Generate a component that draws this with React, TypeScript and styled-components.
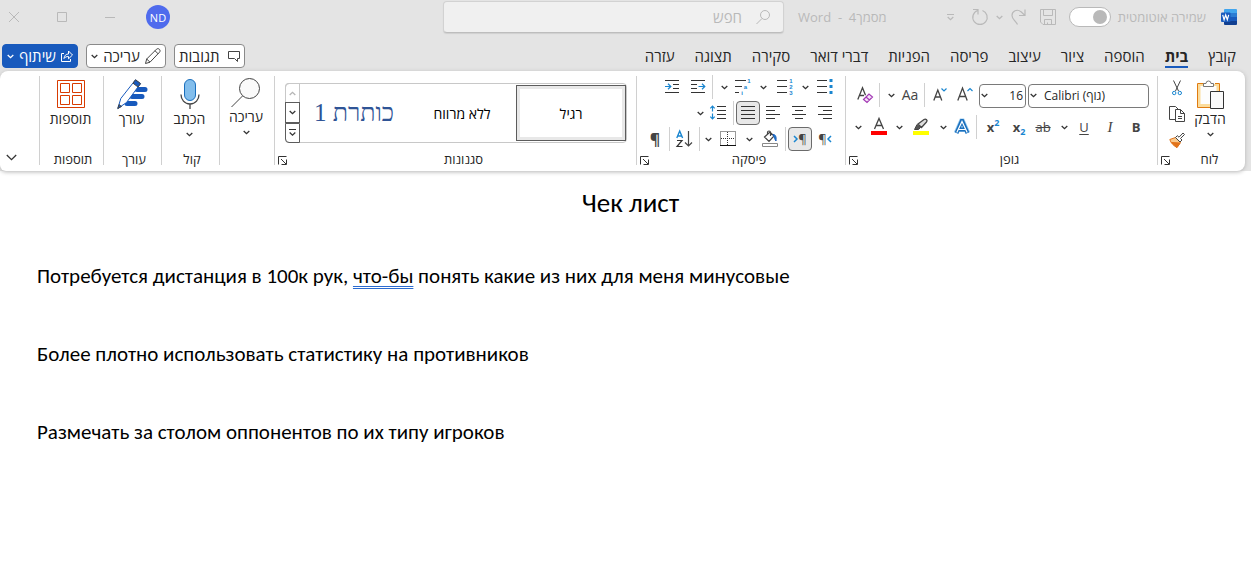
import React from "react";
import styled, { createGlobalStyle, css } from "styled-components";

const UI = '"Open Sans", "Noto Sans", "Liberation Sans", sans-serif';
const INK = "#262626";
const BLUE = "#185abd";
const SKY = "#1a86d0";
const MUTED = "#b9b9b9";

const Global = createGlobalStyle`
  *, *::before, *::after { box-sizing: border-box; }
  body { margin: 0; background: #fff; font-family: ${UI}; color: ${INK}; }
  button, input, select { font: inherit; color: inherit; margin: 0; }
  svg { display: block; flex: none; overflow: visible; }
`;

const Chrome = styled.header`
  background: #e4e4e4;
  direction: rtl;
`;

const TitleBar = styled.div`
  display: grid;
  grid-template-columns: 467px minmax(160px, 1fr) 443px;
  align-items: center;
  height: 34px;
  color: ${MUTED};
  font-size: 13px;
`;

const TitleTools = styled.div`
  display: flex;
  align-items: center;
  padding-right: 14px;
`;

const PlainButton = styled.button<{ $w?: number; $h?: number }>`
  display: flex;
  flex: none;
  align-items: center;
  justify-content: center;
  width: ${(p) => p.$w ?? 26}px;
  height: ${(p) => p.$h ?? 24}px;
  padding: 0;
  border: 0;
  border-radius: 4px;
  background: none;
  white-space: nowrap;
`;

const AutoSave = styled.label`
  display: flex;
  align-items: center;
  gap: 7px;
  margin: 0 15px 0 6px;
  white-space: nowrap;
`;

const Toggle = styled.input`
  appearance: none;
  width: 42px;
  height: 20px;
  padding: 2px;
  border: 1px solid ${MUTED};
  border-radius: 10px;
  background: #fff;
  &::before {
    content: "";
    display: block;
    width: 14px;
    height: 14px;
    margin-right: 1px;
    border-radius: 50%;
    background: ${MUTED};
  }
`;

const DocName = styled.div`
  margin-right: 50px;
  white-space: pre;
`;

const SearchBox = styled.label`
  display: flex;
  align-items: center;
  gap: 14px;
  height: 32px;
  padding: 0 13px;
  border: 1px solid #d2d2d2;
  border-bottom-color: #bdbdbd;
  border-radius: 4px;
  background: #f0f0f0;
  box-shadow: 0 1px 1px #cfcfcf;
`;

const SearchInput = styled.input`
  flex: 1;
  min-width: 0;
  padding: 0;
  border: 0;
  outline: 0;
  background: none;
  font-size: 15px;
  &::placeholder { color: ${MUTED}; opacity: 1; }
`;

const WindowTools = styled.div`
  display: flex;
  align-items: center;
  justify-content: flex-end;
`;

const Avatar = styled.button`
  width: 24px;
  height: 24px;
  margin-left: 22px;
  padding: 0;
  border: 0;
  border-radius: 50%;
  background: #4f6bed;
  color: #fff;
  font-size: 11px;
`;

const TabBar = styled.div`
  display: flex;
  align-items: center;
  justify-content: space-between;
  height: 37px;
  padding: 7px 15px 0 2px;
`;

const Tabs = styled.nav`
  display: flex;
  gap: 20px;
`;

const Tab = styled.a<{ $on?: boolean }>`
  height: 24px;
  border-bottom: 2px solid ${(p) => (p.$on ? BLUE : "transparent")};
  color: ${INK};
  font-size: 15px;
  font-weight: ${(p) => (p.$on ? 700 : 400)};
  line-height: 24px;
  text-decoration: none;
  white-space: nowrap;
`;

const Actions = styled.div`
  display: flex;
  gap: 8px;
`;

const Action = styled.button<{ $w: number; $primary?: boolean }>`
  display: flex;
  align-items: center;
  justify-content: space-between;
  width: ${(p) => p.$w}px;
  height: 24px;
  padding: 0 4px;
  border: 1px solid ${(p) => (p.$primary ? BLUE : "#8a8a8a")};
  border-radius: 4px;
  background: ${(p) => (p.$primary ? BLUE : "#fff")};
  color: ${(p) => (p.$primary ? "#fff" : INK)};
  font-size: 15px;
  line-height: 20px;
  white-space: nowrap;
`;

const Ribbon = styled.div`
  display: flex;
  height: 100px;
  margin-right: 6px;
  padding: 5px 0 6px;
  border-radius: 8px 8px 8px 6px;
  background: #fff;
  box-shadow: 0 1px 4px #b4b4b4;
`;

const Group = styled.section<{ $w?: number }>`
  display: flex;
  flex: none;
  flex-direction: column;
  justify-content: space-between;
  width: ${(p) => (p.$w ? p.$w + "px" : "auto")};
  border-left: 1px solid #d0d0d0;
`;

const StyleGroup = styled(Group)`
  flex: 1;
  min-width: 240px;
`;

const GroupFoot = styled.div`
  display: flex;
  align-items: flex-end;
  height: 10px;
  padding-left: 3px;
`;

const GroupName = styled.div<{ $launch?: boolean }>`
  flex: 1;
  padding-left: ${(p) => (p.$launch ? 4 : 0)}px;
  font-size: 13px;
  line-height: 12px;
  text-align: center;
`;

const Launcher = styled.button`
  height: 9px;
  padding: 0;
  border: 0;
  background: none;
`;

const Rows = styled.div<{ $gap: number; $top: number; $side: number }>`
  display: flex;
  flex-direction: column;
  gap: ${(p) => p.$gap}px;
  padding: ${(p) => p.$top}px ${(p) => p.$side}px 0 0;
`;

const Row = styled.div`
  display: flex;
  align-items: center;
  height: 22px;
`;

const Tool = styled(PlainButton)<{ $active?: boolean }>`
  ${(p) =>
    p.$active &&
    css`
      border: 1px solid #6b6b6b;
      background: #e8e8e8;
    `}
`;

const Rule = styled.span<{ $w: number }>`
  display: flex;
  flex: none;
  justify-content: center;
  width: ${(p) => p.$w}px;
  height: 24px;
  &::before {
    content: "";
    width: 1px;
    background: #d0d0d0;
  }
`;

const Combo = styled.div<{ $w: number }>`
  position: relative;
  flex: none;
  width: ${(p) => p.$w}px;
  height: 24px;
  & + & { margin-right: 2px; }
  svg {
    position: absolute;
    left: 2px;
    top: 10px;
    pointer-events: none;
  }
`;

const Select = styled.select<{ $dir: "ltr" | "rtl" }>`
  appearance: none;
  width: 100%;
  height: 24px;
  padding: ${(p) => (p.$dir === "ltr" ? "0 0 0 15px" : "0 2px 0 0")};
  border: 1px solid #7a7a7a;
  border-radius: 4px;
  background: #fff;
  direction: ${(p) => p.$dir};
  font-size: 12px;
`;

const Glyph = styled.span<{ $size?: number; $bold?: boolean; $color?: string }>`
  color: ${(p) => p.$color ?? "#444"};
  direction: ltr;
  font-size: ${(p) => p.$size ?? 13}px;
  font-weight: ${(p) => (p.$bold ? 700 : 400)};
  line-height: 20px;
`;

const Italic = styled(Glyph)`
  font-family: "Liberation Serif", serif;
  font-style: italic;
`;

const Under = styled(Glyph)`
  text-decoration: underline;
  text-underline-offset: 2px;
`;

const Struck = styled(Glyph)`
  text-decoration: line-through;
`;

const Script = styled.span<{ $sub?: boolean }>`
  align-self: ${(p) => (p.$sub ? "flex-end" : "flex-start")};
  color: ${SKY};
  font-size: 9px;
  font-weight: 700;
  line-height: ${(p) => (p.$sub ? 10 : 12)}px;
`;

const ScriptPair = styled.span`
  display: flex;
  direction: ltr;
  height: 20px;
`;

const Clipboard = styled.div`
  display: flex;
  padding-right: 14px;
`;

const ClipTools = styled.div`
  display: flex;
  flex-direction: column;
  gap: 2px;
  padding-right: 2px;
`;

const BigButton = styled.button<{ $w?: number }>`
  display: flex;
  flex: none;
  flex-direction: column;
  align-items: center;
  width: ${(p) => (p.$w ? p.$w + "px" : "100%")};
  padding: 2px 2px 0 0;
  border: 0;
  background: none;
  font-size: 14px;
  line-height: 18px;
  white-space: nowrap;
`;

const BigIcon = styled.span<{ $h?: number }>`
  display: flex;
  align-items: center;
  justify-content: center;
  height: ${(p) => p.$h ?? 32}px;
`;

const BigChevron = styled.span`
  display: flex;
  align-items: center;
  height: 13px;
`;

const Gallery = styled.div`
  display: flex;
  height: 60px;
  margin: 7px 9px 0 10px;
  border: 1px solid #c8c8c8;
  border-radius: 4px;
`;

const StyleCard = styled.button<{ $on?: boolean }>`
  flex: 1;
  height: 56px;
  margin-top: 1px;
  padding: 0;
  border: 0;
  background: #fff;
  color: #000;
  font-size: 14px;
  white-space: nowrap;
  ${(p) =>
    p.$on &&
    css`
      border: 1px solid #5c5c5c;
      box-shadow: inset 0 0 0 3px #e8e8e8;
    `}
`;

const HeadingSample = styled.span`
  color: #2f5496;
  font-family: "Liberation Serif", serif;
  font-size: 25px;
`;

const Scroller = styled.div`
  display: flex;
  flex: none;
  flex-direction: column;
  width: 15px;
  margin: -1px 0 -1px -1px;
`;

const ScrollButton = styled.button<{ $off?: boolean }>`
  display: flex;
  flex: 1;
  align-items: center;
  justify-content: center;
  padding: 0;
  border: 1px solid ${(p) => (p.$off ? "#c8c8c8" : "#5c5c5c")};
  background: none;
  &:first-child { border-top-left-radius: 4px; border-bottom: 0; }
  &:last-child { border-bottom-left-radius: 4px; }
`;

const Collapse = styled.div`
  display: flex;
  flex: none;
  align-items: flex-end;
  width: 39px;
  padding-left: 6px;
  justify-content: flex-end;
`;

const Document = styled.main`
  padding: 14px 37px 40px;
  color: #000;
  font-family: Carlito, Lato, sans-serif;
`;

const DocTitle = styled.h1`
  margin: 0 0 39px;
  padding-left: 10px;
  font-size: 27px;
  font-weight: 400;
  line-height: 36px;
  text-align: center;
`;

const Para = styled.p`
  margin: 0 0 46px;
  font-size: 21px;
  line-height: 32px;
`;

const Flagged = styled.u`
  text-decoration: underline double #2b6bd0 1px;
  text-underline-offset: 3px;
`;

const Chevron = ({ color = "#333", up = false }: { color?: string; up?: boolean }) => (
  <svg width="7" height="5" viewBox="0 0 7 5" fill="none" stroke={color} strokeWidth="1.3">
    <path d={up ? "M.7 4l2.8-2.7L6.3 4" : "M.7 1l2.8 2.7L6.3 1"} />
  </svg>
);

type SvgProps = { w?: number; h?: number; stroke?: string; children: React.ReactNode };
const Icon = ({ w = 16, h = 16, stroke = "#444", children }: SvgProps) => (
  <svg width={w} height={h} viewBox={`0 0 ${w} ${h}`} fill="none" stroke={stroke}>
    {children}
  </svg>
);

const WordLogo = () => (
  <svg width="16" height="16" viewBox="0 0 16 16">
    <path d="M4 0h11a1 1 0 0 1 1 1v3H3V1a1 1 0 0 1 1-1z" fill="#41a5ee" />
    <path d="M3 4h13v4H3z" fill="#2b7cd3" />
    <path d="M3 8h13v4H3z" fill="#185abd" />
    <path d="M3 12h13v3a1 1 0 0 1-1 1H4a1 1 0 0 1-1-1z" fill="#103f91" />
    <rect y="3.500" width="9.500" height="9.500" rx="1" fill="#185abd" />
    <path d="M1.700 5.800l1.400 5 1.600-4.800 1.600 4.800 1.400-5" fill="none" stroke="#fff" strokeWidth="1.200" />
  </svg>
);

const LauncherIcon = () => (
  <Icon w={9} h={9} stroke="#333">
    <path d="M8.500.5h-8v8M3 3l5 5M8.500 3.500v5h-5" />
  </Icon>
);

const Lines = ({ short }: { short?: "left" | "right" }) => (
  <Icon w={14} h={14} stroke="#333">
    <path
      d={
        short === "left"
          ? "M0 .5h14M0 4.500h9M0 8.500h14M0 12.500h9"
          : short === "right"
            ? "M0 .5h14M5 4.500h9M0 8.500h14M5 12.500h9"
            : "M0 .5h14M0 4.500h14M0 8.500h14M0 12.500h14"
      }
    />
  </Icon>
);

const CenterLines = () => (
  <Icon w={14} h={14} stroke="#333">
    <path d="M0 .5h14M3 4.500h8M0 8.500h14M3 12.500h8" />
  </Icon>
);

const Digit = styled.text`
  fill: ${SKY};
  stroke: none;
  font: 700 6px "Liberation Sans", sans-serif;
`;

const ChevronTool = ({ w, label }: { w: number; label: string }) => (
  <Tool $w={w} aria-label={label}>
    <Chevron />
  </Tool>
);

const Foot = ({ name, launch = true }: { name: string; launch?: boolean }) => (
  <GroupFoot>
    <GroupName $launch={launch}>{name}</GroupName>
    {launch && (
      <Launcher aria-label={`${name} – אפשרויות`}>
        <LauncherIcon />
      </Launcher>
    )}
  </GroupFoot>
);

const TABS = ["קובץ", "בית", "הוספה", "ציור", "עיצוב", "פריסה", "הפניות", "דברי דואר", "סקירה", "תצוגה", "עזרה"];

const ClipboardGroup = () => (
  <Group $w={88}>
    <Clipboard>
      <BigButton $w={40}>
        <BigIcon>
          <Icon w={24} h={31}>
            <path d="M6 4.500H-.5v24H12M17 4.500h4.500V12" stroke="#e07b10" />
            <path d="M0 5h21v8h-8v15H0z" fill="#fbdc9c" stroke="none" />
            <path d="M2.500 7h16v6H12v12H2.500z" fill="#fdfdfd" stroke="none" />
            <path d="M5.500 7.500v-3H8a2.500 2.500 0 0 1 5 0h2.500v3z" fill="#fff" stroke="#777" />
            <path d="M12.500 12.500h13v17h-13z" fill="#fafafa" stroke="#333" />
          </Icon>
        </BigIcon>
        הדבק
        <BigChevron>
          <Chevron />
        </BigChevron>
      </BigButton>
      <ClipTools>
        <PlainButton $w={24} aria-label="גזור">
          <Icon w={10} h={16}>
            <path d="M1.500.5l5 10.500M8.500.5l-5 10.500" />
            <circle cx="2.200" cy="13" r="1.700" stroke={SKY} />
            <circle cx="7.800" cy="13" r="1.700" stroke={SKY} />
          </Icon>
        </PlainButton>
        <PlainButton $w={24} aria-label="העתק">
          <Icon>
            <path d="M6 13.500H.5V.5h6L9 3" />
            <path d="M6.500 3.500h5l4 4v8h-9z" fill="#fff" />
            <path d="M11.500 3.500v4h4M9 10.500h4M9 12.500h4" />
          </Icon>
        </PlainButton>
        <PlainButton $w={24} aria-label="מברשת עיצוב">
          <Icon>
            <path d="M.8 7.500l5.700-2 5 5L8 15.500C5 14 2 11.500.8 7.500z" fill="#f9c98c" stroke="#e2731a" />
            <path d="M2.500 10.500L11 11l-3 4.500z" fill="#e2731a" stroke="#e2731a" />
            <path d="M6.500 5.500l1.800-1.800 1.700 1.500L14 1l1.500 1.500-4 4L13 8l-2 2z" fill="#fff" />
          </Icon>
        </PlainButton>
      </ClipTools>
    </Clipboard>
    <Foot name="לוח" />
  </Group>
);

const FontGroup = () => (
  <Group $w={312}>
    <Rows $gap={10} $top={8} $side={8}>
      <Row>
        <Combo $w={121}>
          <Select $dir="ltr" aria-label="גופן">
            <option>Calibri (גוף)</option>
          </Select>
          <Chevron />
        </Combo>
        <Combo $w={47}>
          <Select $dir="rtl" aria-label="גודל גופן">
            <option>16</option>
          </Select>
          <Chevron />
        </Combo>
        <Tool $w={28} aria-label="הגדל גופן">
          <Icon>
            <path d="M.8 13.500L5.500 1l4.700 12.500M2.500 9.500h6" strokeWidth="1.300" />
            <path d="M10.500 4L13 1.500 15.500 4" stroke={SKY} strokeWidth="1.200" />
          </Icon>
        </Tool>
        <Tool $w={22} aria-label="הקטן גופן">
          <Icon w={14}>
            <path d="M.8 13.500L4.800 3l4 10.500M2.300 10h5" strokeWidth="1.300" />
            <path d="M8.500 1.500L11 4l2.500-2.500" stroke={SKY} strokeWidth="1.200" />
          </Icon>
        </Tool>
        <Rule $w={10} />
        <Tool $w={18} aria-label="שנה רישיות">
          <Glyph $size={14}>Aa</Glyph>
        </Tool>
        <ChevronTool w={20} label="אפשרויות רישיות" />
        <Rule $w={4} />
        <Tool $w={24} aria-label="נקה עיצוב">
          <Icon>
            <path d="M.8 12.500L5.500.8l3 7.500M2.300 8.500H7" strokeWidth="1.300" />
            <path d="M6.500 12.500l5.500-5.500 3.500 3-5.500 5.500zM9 10l3.500 3" fill="#f6e3f8" stroke="#a33bb5" strokeWidth="1.200" />
          </Icon>
        </Tool>
      </Row>
      <Row>
        <Tool $w={26} aria-label="מודגש"><Glyph $bold>B</Glyph></Tool>
        <Tool $w={26} aria-label="נטוי"><Italic $size={15}>I</Italic></Tool>
        <Tool $w={26} aria-label="קו תחתון"><Under>U</Under></Tool>
        <ChevronTool w={14} label="אפשרויות קו תחתון" />
        <Tool $w={28} aria-label="קו חוצה"><Struck>ab</Struck></Tool>
        <Tool $w={20} aria-label="כתב תחתי">
          <ScriptPair><Glyph $bold>x</Glyph><Script $sub>2</Script></ScriptPair>
        </Tool>
        <Tool $w={32} aria-label="כתב עילי">
          <ScriptPair><Glyph $bold>x</Glyph><Script>2</Script></ScriptPair>
        </Tool>
        <Rule $w={1} />
        <Tool $w={28} aria-label="אפקטי טקסט">
          <Icon>
            <path d="M2.200 14L7.500 2h1l5.300 12M4.500 10.500h7" stroke="#9cccf0" strokeWidth="5" />
            <path d="M2.500 14L7.700 2h.6L13.500 14M4.500 10.500h7" stroke="#1a6fbd" strokeWidth="3.800" />
            <path d="M2.800 13.500L8 2.500l5.200 11M4.800 10.500h6.400" stroke="#fff" strokeWidth="1.200" />
          </Icon>
        </Tool>
        <ChevronTool w={10} label="עוד אפקטים" />
        <Tool $w={34} aria-label="צבע סימון">
          <Icon>
            <path d="M1.500 10.500l2.500-5 3.500 3-2 2z" fill="#555" />
            <path d="M5 5L11 .5c2-1 4 1 2.500 2.500L8.500 8.500z" fill="#ddd" strokeWidth="1.300" />
            <path d="M0 12h16v4H0z" fill="#ff0" stroke="none" />
          </Icon>
        </Tool>
        <ChevronTool w={10} label="בחר צבע סימון" />
        <Tool $w={30} aria-label="צבע גופן">
          <Icon>
            <path d="M3.500 10L8 -.5l4.500 10.500M5 6.500h6" strokeWidth="1.300" />
            <path d="M0 12h16v4H0z" fill="#f00" stroke="none" />
          </Icon>
        </Tool>
        <ChevronTool w={12} label="בחר צבע גופן" />
      </Row>
    </Rows>
    <Foot name="גופן" />
  </Group>
);

const ParagraphGroup = () => (
  <Group $w={209}>
    <Rows $gap={4} $top={0} $side={7}>
      <Row>
        <Tool aria-label="תבליטים">
          <Icon>
            <path d="M0 1.500h10M0 7.500h10M0 13.500h10" stroke="#333" />
            <path d="M12.500 0h3v3h-3zM12.500 6h3v3h-3zM12.500 12h3v3h-3z" fill={SKY} stroke="none" />
          </Icon>
        </Tool>
        <ChevronTool w={14} label="סוגי תבליטים" />
        <Tool aria-label="מספור">
          <Icon>
            <path d="M0 1.500h10M0 7.500h10M0 13.500h10" stroke="#333" />
            <Digit x="15.500" y="4">1</Digit>
            <Digit x="15.500" y="10">2</Digit>
            <Digit x="15.500" y="16">3</Digit>
          </Icon>
        </Tool>
        <ChevronTool w={18} label="סוגי מספור" />
        <Tool $w={22} aria-label="רשימה מרובת רמות">
          <Icon>
            <path d="M0 1.500h11M0 7.500h7M0 13.500h4" stroke="#333" />
            <Digit x="15.500" y="4">1</Digit>
            <Digit x="12" y="10">a</Digit>
            <Digit x="8" y="16">i</Digit>
          </Icon>
        </Tool>
        <ChevronTool w={16} label="סוגי רשימות" />
        <Rule $w={8} />
        <Tool $w={20} aria-label="הקטן כניסה">
          <Icon w={14} h={14} stroke="#333">
            <path d="M0 .5h14M0 4.500h6M0 8.500h6M0 12.500h14" />
            <path d="M7.500 6.500H14M11 3.800l2.800 2.700L11 9.200" stroke={SKY} strokeWidth="1.200" />
          </Icon>
        </Tool>
        <Tool $w={32} aria-label="הגדל כניסה">
          <Icon w={14} h={14} stroke="#333">
            <path d="M0 .5h14M8 4.500h6M8 8.500h6M0 12.500h14" />
            <path d="M0 6.500h6M3 3.800l2.800 2.700L3 9.200" stroke={SKY} strokeWidth="1.200" />
          </Icon>
        </Tool>
      </Row>
      <Row>
        <Tool aria-label="יישור לימין"><Lines short="right" /></Tool>
        <Tool aria-label="מירכוז"><CenterLines /></Tool>
        <Tool aria-label="יישור לשמאל"><Lines short="left" /></Tool>
        <Tool $active $w={24} aria-label="יישור לשני הצדדים"><Lines /></Tool>
        <Rule $w={6} />
        <Tool $w={24} aria-label="מרווח בין שורות">
          <Icon>
            <path d="M7 1.500h9M7 5.500h9M7 9.500h9M7 13.500h9" stroke="#333" />
            <path d="M2.500 1v5.500M.3 3.300l2.200-2.300 2.200 2.300M2.500 8.500V14M.3 11.700l2.200 2.300 2.200-2.300" stroke={SKY} strokeWidth="1.200" />
          </Icon>
        </Tool>
        <ChevronTool w={12} label="אפשרויות מרווח" />
      </Row>
      <Row>
        <Tool aria-label="כיוון מימין לשמאל">
          <Icon w={5} h={8}><path d="M4 1L1 4l3 3" stroke={SKY} strokeWidth="1.500" /></Icon>
          <Glyph>¶</Glyph>
        </Tool>
        <Tool $active $w={24} aria-label="כיוון משמאל לימין">
          <Glyph>¶</Glyph>
          <Icon w={5} h={8}><path d="M1 1l3 3-3 3" stroke={SKY} strokeWidth="1.500" /></Icon>
        </Tool>
        <Rule $w={6} />
        <Tool $w={24} aria-label="הצללה">
          <Icon>
            <path d="M2.500 6L8 1l4 4-5 5.500zM5.500 3V1.500a1.500 1.500 0 0 1 3 0V5" strokeWidth="1.200" />
            <path d="M11 3.500c2.500 0 3.500 2 3 6.500-1-1-1.300-3-3-6.500z" fill={SKY} stroke={BLUE} />
            <path d="M.5 12.500h15v3H.5z" fill="#fff" stroke="#888" />
          </Icon>
        </Tool>
        <ChevronTool w={18} label="צבעי הצללה" />
        <Tool $w={24} aria-label="גבולות">
          <Icon>
            <path d="M.5.5h15v14H.5zM7.500 1v13M1 7.500h14" stroke="#333" strokeDasharray="1 1" />
            <path d="M0 14.500h16" stroke="#111" />
          </Icon>
        </Tool>
        <ChevronTool w={16} label="סוגי גבולות" />
        <Rule $w={2} />
        <Tool $w={28} aria-label="מיין">
          <Icon w={17} h={16}>
            <path d="M.8 7L3.700 0l2.900 7M1.800 5h4" stroke={SKY} strokeWidth="1.400" />
            <path d="M1 9.500h5L1 15.500h5.500" stroke="#333" strokeWidth="1.200" />
            <path d="M12.500 0v15M9 11.500l3.500 3.500 3.500-3.500" strokeWidth="1.200" />
          </Icon>
        </Tool>
        <Rule $w={2} />
        <Tool aria-label="הצג סימני פיסקה"><Glyph $size={16} $bold>¶</Glyph></Tool>
      </Row>
    </Rows>
    <Foot name="פיסקה" />
  </Group>
);

const StylesGroup = () => (
  <StyleGroup>
    <Gallery>
      <StyleCard $on>רגיל</StyleCard>
      <StyleCard>ללא מרווח</StyleCard>
      <StyleCard><HeadingSample>כותרת 1</HeadingSample></StyleCard>
      <Scroller>
        <ScrollButton $off aria-label="למעלה"><Chevron up color="#b5b5b5" /></ScrollButton>
        <ScrollButton aria-label="למטה"><Chevron /></ScrollButton>
        <ScrollButton aria-label="עוד">
          <Icon w={7} h={8} stroke="#333"><path d="M0 .5h7M.7 3.500l2.800 2.700 2.800-2.700" strokeWidth="1.200" /></Icon>
        </ScrollButton>
      </Scroller>
    </Gallery>
    <Foot name="סגנונות" />
  </StyleGroup>
);

export default function App() {
  return (
    <>
      <Global />
      <Chrome>
        <TitleBar>
          <TitleTools>
            <WordLogo />
            <AutoSave>
              שמירה אוטומטית
              <Toggle type="checkbox" />
            </AutoSave>
            <PlainButton $w={30} aria-label="שמור">
              <Icon w={16} h={16} stroke={MUTED}>
                <path d="M.5.5h15v15H3L.5 13zM3.500.5v6h9v-6M4.500 15.500v-5h7v5M7.500 15.500v-2" />
              </Icon>
            </PlainButton>
            <PlainButton $w={28} aria-label="בצע שוב">
              <Icon w={15} h={16} stroke={MUTED}>
                <path d="M14 .5v6H8M14 6.500L10 2.800C6-.5 1 2 1 6.500 1 10 4 11 6.500 15.500" strokeWidth="1.200" />
              </Icon>
            </PlainButton>
            <PlainButton $w={10} aria-label="היסטוריה"><Chevron color={MUTED} /></PlainButton>
            <PlainButton $w={30} aria-label="בטל">
              <Icon w={16} h={16} stroke={MUTED}>
                <path d="M1 .5h5v5M5.500 1.500A7.200 7.200 0 1 0 10.500 1.500" strokeWidth="1.200" />
              </Icon>
            </PlainButton>
            <PlainButton $w={28} aria-label="התאמה אישית">
              <Icon w={7} h={7} stroke={MUTED}><path d="M0 .5h7M.7 3l2.800 2.700L6.300 3" strokeWidth="1.200" /></Icon>
            </PlainButton>
            <DocName>מסמך4  -  Word</DocName>
          </TitleTools>
          <SearchBox>
            <Icon w={14} h={14} stroke={MUTED}>
              <circle cx="9" cy="5" r="4.500" />
              <path d="M6 8.500L.5 14" />
            </Icon>
            <SearchInput placeholder="חפש" aria-label="חפש" />
          </SearchBox>
          <WindowTools>
            <Avatar>ND</Avatar>
            <PlainButton $w={28} aria-label="מזער"><Icon w={10} h={10} stroke={MUTED}><path d="M0 5.500h10" /></Icon></PlainButton>
            <PlainButton $w={68} aria-label="הגדל"><Icon w={10} h={10} stroke={MUTED}><path d="M.5.5h9v9h-9z" /></Icon></PlainButton>
            <PlainButton $w={28} aria-label="סגור"><Icon w={10} h={10} stroke={MUTED}><path d="M0 0l10 10M10 0L0 10" /></Icon></PlainButton>
          </WindowTools>
        </TitleBar>
        <TabBar>
          <Tabs>
            {TABS.map((t, i) => (
              <Tab key={t} href="#" $on={i === 1}>{t}</Tab>
            ))}
          </Tabs>
          <Actions>
            <Action $w={71}>
              <Icon w={12} h={12}><path d="M.5 1.500h11v7h-2v3l-3-3h-6z" /></Icon>
              תגובות
            </Action>
            <Action $w={80}>
              <Icon>
                <path d="M.5 15.500l1.200-4.500L11.500 1.200c2-1.700 4.800 1 3 3L5 14.200zM10 2.700l3.200 3.200M1.700 11L5 14.200" />
              </Icon>
              עריכה
              <Chevron />
            </Action>
            <Action $w={76} $primary>
              <Icon w={12} h={12} stroke="#fff">
                <path d="M3 3.500H.5v8h9V9M3 8.500c.3-3 2-4.500 4.500-4.500V1l4 4-4 3.800V6.500C5.500 6.500 4 7 3 8.500z" />
              </Icon>
              שיתוף
              <Chevron color="#fff" />
            </Action>
          </Actions>
        </TabBar>
        <Ribbon>
          <ClipboardGroup />
          <FontGroup />
          <ParagraphGroup />
          <StylesGroup />
          <Group $w={55}>
            <BigButton>
              <BigIcon $h={30}>
                <Icon w={30} h={30}>
                  <circle cx="18.500" cy="10.500" r="10" fill="#fafafa" />
                  <path d="M11.500 18L.5 29" />
                </Icon>
              </BigIcon>
              עריכה
              <BigChevron><Chevron /></BigChevron>
            </BigButton>
          </Group>
          <Group $w={58}>
            <BigButton>
              <BigIcon>
                <Icon w={20} h={30}>
                  <rect x="4.500" y=".5" width="11" height="21" rx="5.500" fill="#83beec" stroke="#1a6fbd" />
                  <path d="M1 15.500c0 5 3.500 9.500 9 9.500s9-4.500 9-9.500M10 25v5" strokeWidth="1.300" />
                </Icon>
              </BigIcon>
              הכתב
              <BigChevron><Chevron /></BigChevron>
            </BigButton>
            <Foot name="קול" launch={false} />
          </Group>
          <Group $w={58}>
            <BigButton>
              <BigIcon>
                <Icon w={30} h={30}>
                  <path d="M20 10.500h8M15 17.500h10M10 24.500h8" stroke={BLUE} strokeWidth="5" strokeLinecap="round" />
                  <path d="M.8 29.500l3-10L18.500.8l5 3.800L9.500 23.500z" fill="#fff" stroke={BLUE} />
                  <path d="M18.500.8l5 3.800-2.500 3.400-5-3.800zM.8 29.500l1.200-4 2.500 2z" fill={BLUE} />
                </Icon>
              </BigIcon>
              עורך
            </BigButton>
            <Foot name="עורך" launch={false} />
          </Group>
          <Group $w={64}>
            <BigButton>
              <BigIcon>
                <Icon w={28} h={28} stroke="#d83b01">
                  <path d="M.5.5h27v27H.5zM3.500 3.500h9v9h-9zM15.500 3.500h9v9h-9zM3.500 15.500h9v9h-9zM15.500 15.500h9v9h-9z" />
                </Icon>
              </BigIcon>
              תוספות
            </BigButton>
            <Foot name="תוספות" launch={false} />
          </Group>
          <Collapse>
            <PlainButton $w={11} $h={16} aria-label="כווץ את רצועת הכלים">
              <Icon w={11} h={7} stroke="#333"><path d="M.8 1l4.700 4.700L10.200 1" strokeWidth="1.300" /></Icon>
            </PlainButton>
          </Collapse>
        </Ribbon>
      </Chrome>
      <Document lang="ru">
        <DocTitle>Чек лист</DocTitle>
        <Para>
          Потребуется дистанция в 100к рук, <Flagged>что-бы</Flagged> понять какие из них для меня минусовые
        </Para>
        <Para>Более плотно использовать статистику на противников</Para>
        <Para>Размечать за столом оппонентов по их типу игроков</Para>
      </Document>
    </>
  );
}
